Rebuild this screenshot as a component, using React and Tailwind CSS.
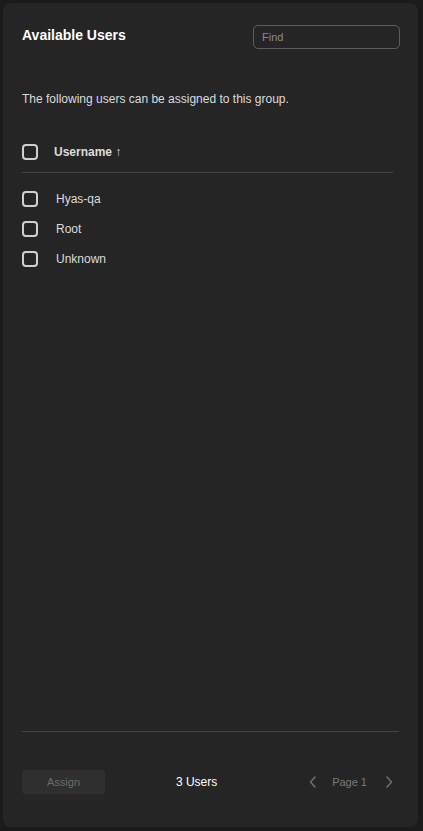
import React from "react";

const Box = () => (
  <span className="block w-4 h-4 rounded-[4px] border-2 border-[#d0d0d0] shrink-0" />
);

export default function App() {
  const users = ["Hyas-qa", "Root", "Unknown"];
  return (
    <div className="w-[423px] h-[831px] bg-[#1b1b1b] p-[3px] pr-[5px] pb-[4px]" style={{ fontFamily: '"Liberation Sans", Arial, sans-serif' }}>
      <div className="h-full bg-[#252525] rounded-[8px] flex flex-col px-[19px]">
        <div className="flex items-center justify-between pt-[22px] h-[45px]">
          <div className="text-white font-bold text-[14px] leading-none -mt-[3px]">Available Users</div>
          <div className="w-[147px] h-[24px] border border-[#5c5c5c] rounded-[5px] flex items-center px-[8px] text-[11px] text-[#8a8a8a] mr-[-1px] mt-[1px]">Find</div>
        </div>
        <div className="mt-[45px] text-[12px] text-[#dcdcdc] leading-none">The following users can be assigned to this group.</div>
        <div className="mt-[39px] flex items-center h-[16px] pr-[6px]">
          <Box />
          <span className="ml-[16px] text-[12px] font-bold text-[#dcdcdc]">Username ↑</span>
        </div>
        <div className="mt-[12px] mr-[6px] h-px bg-[#444444]" />
        <div className="mt-[18px] flex flex-col gap-[14px]">
          {users.map((u) => (
            <div key={u} className="flex items-center h-[16px]">
              <Box />
              <span className="ml-[18px] text-[12px] text-[#dcdcdc]">{u}</span>
            </div>
          ))}
        </div>
        <div className="flex-1" />
        <div className="h-px bg-[#444444]" />
        <div className="mt-[38px] flex items-center h-[24px]">
          <div className="w-[83px] h-[24px] rounded-[3px] bg-[#2f2f2f] flex items-center justify-center text-[11px] text-[#6b6b6b]">Assign</div>
          <div className="flex-1 text-center text-[12px] text-white pr-[20px]">3 Users</div>
          <div className="flex items-center text-[11px] text-[#7a7a7a] pr-[5px]">
            <svg width="10" height="14" viewBox="0 0 10 14" fill="none" stroke="#6e6e6e" strokeWidth="1.6" strokeLinecap="round" strokeLinejoin="round"><path d="M7 2 L2.5 7 L7 12" /></svg>
            <span className="ml-[14px] mr-[17px]">Page 1</span>
            <svg width="10" height="14" viewBox="0 0 10 14" fill="none" stroke="#6e6e6e" strokeWidth="1.6" strokeLinecap="round" strokeLinejoin="round"><path d="M3 2 L7.5 7 L3 12" /></svg>
          </div>
        </div>
        <div className="h-[33px]" />
      </div>
    </div>
  );
}
